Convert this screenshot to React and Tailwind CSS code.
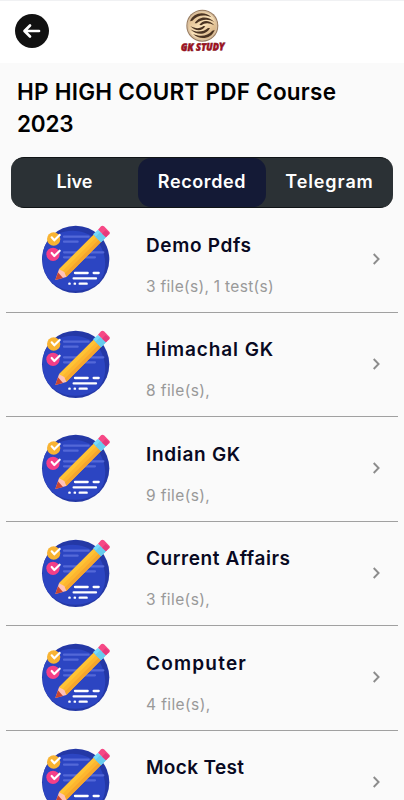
const courses = [
  { title: 'Demo Pdfs', info: '3 file(s), 1 test(s)', titleClass: 'tracking-[0.65px]', infoClass: 'tracking-[0.3px]' },
  { title: 'Himachal GK', info: '8 file(s),', titleClass: 'tracking-[0.9px]', infoClass: 'tracking-[0.4px]' },
  { title: 'Indian GK', info: '9 file(s),', titleClass: 'tracking-[0.7px]', infoClass: 'tracking-[0.4px]' },
  { title: 'Current Affairs', info: '3 file(s),', titleClass: 'tracking-[0.57px]', infoClass: 'tracking-[0.4px]' },
  { title: 'Computer', info: '4 file(s),', titleClass: 'tracking-[1.2px]', infoClass: 'tracking-[0.4px]' },
  { title: 'Mock Test', titleClass: 'tracking-[0.35px]' },
];

const BackIcon = () => (
  <svg width="34" height="34" viewBox="0 0 34 34" fill="none">
    <circle cx="17" cy="17" r="17" fill="#111111" />
    <path d="M24 17H10M15 11.5L9.5 17L15 22.5" stroke="#fff" strokeWidth="2.7" strokeLinecap="round" strokeLinejoin="round" />
  </svg>
);

const Logo = () => (
  <svg width="60" height="52" viewBox="-18 0 180 156" className="overflow-visible">
    <defs>
      <linearGradient id="gold" x1="0" y1="0" x2="1" y2="1">
        <stop offset="0" stopColor="#d2ab7c" />
        <stop offset="0.5" stopColor="#fbe3ba" />
        <stop offset="1" stopColor="#c49a68" />
      </linearGradient>
    </defs>
    <circle cx="73" cy="53" r="48" fill="#96795d" />
    <circle cx="73" cy="53" r="45" fill="#d9c0a0" />
    <circle cx="73" cy="53" r="41" fill="url(#gold)" />
    <g fill="#4a3322">
      <path d="M36 40C46 13 80 8 101 28C78 18 57 22 43 38Z" />
      <path d="M50 46C60 26 88 21 109 42C90 31 69 34 56 46Z" />
      <path d="M64 51C74 36 92 34 109 52C93 43 80 44 70 52Z" />
      <path d="M110 66C100 93 66 98 45 78C68 88 89 84 103 68Z" />
      <path d="M96 60C86 80 58 85 37 64C56 75 77 72 90 60Z" />
      <path d="M82 55C72 70 54 72 37 54C53 63 66 62 76 54Z" />
    </g>
    <text x="9" y="128" textLength="131" lengthAdjust="spacingAndGlyphs" fontFamily="Open Sans, sans-serif" fontSize="31" fontWeight="800" fontStyle="italic" fill="#a9101f" stroke="#7d101b" strokeWidth="1.6" transform="rotate(-1 72 124)">GK STUDY</text>
  </svg>
);

const CourseIcon = () => (
  <svg width="72" height="72" viewBox="30 25 216 216" fill="none">
    <circle cx="137" cy="134" r="101" fill="#2438a6" />
    <path d="M46 91C70 45 150 30 200 75C235 120 235 185 195 213C135 245 60 225 42 165C35 140 37 110 46 91Z" fill="#2c45c2" />
    <g stroke="#5368d8" strokeWidth="6.5" strokeLinecap="round">
      <path d="M102 66H176M102 81H143M102 113H220M102 128H195" />
    </g>
    <g stroke="#fff" strokeWidth="7" strokeLinecap="round">
      <path d="M135 175H173M191 175H206M131 191H198M149 207H170M118 207H119M134 207H135" />
    </g>
    <circle cx="71" cy="73" r="20" fill="#f8b332" />
    <circle cx="69" cy="119" r="20" fill="#f43f88" />
    <path d="M65 68L73 77L89 61M65 115L73 124L89 108" stroke="#fff" strokeWidth="6.5" strokeLinecap="round" strokeLinejoin="round" />
    <path d="M87 164L191 60L213 82L109 187Z" fill="#fdb62f" />
    <path d="M87 164L191 60L199 68L94 173Z" fill="#ffc335" />
    <path d="M101 180L206 75L213 82L109 187Z" fill="#f6a52d" />
    <path d="M87 164L76 196L109 187L103 172Z" fill="#ffc2b8" />
    <path d="M84 173L76 196L99 190Z" fill="#c84632" />
    <path d="M189 59L204 45L228 68L213 83Z" fill="#78dbfb" />
    <path d="M196 66L211 52L228 68L213 83Z" fill="#68cced" />
    <path d="M204 45L213 35Q217 31 222 35L238 51Q242 55 238 59L228 68Z" fill="#f64885" />
    <path d="M216 57L227 46L238 55L228 68Z" fill="#e6397b" />
  </svg>
);

const Chevron = () => (
  <svg width="8" height="12" viewBox="0 0 8 12" fill="none">
    <path d="M1.7 1L6.6 6L1.7 11" stroke="#8c8c8c" strokeWidth="1.9" />
  </svg>
);

const CourseRow = ({ course }) => (
  <div className="mx-[6px] flex h-[104.5px] shrink-0 border-b border-[#a0a0a0]">
    <div className="w-[140px] shrink-0 pl-[34px] pt-[15px]">
      <CourseIcon />
    </div>
    <div className="flex-1 whitespace-nowrap pt-[23.7px]">
      <h2 className={`text-[19px] font-semibold leading-[28px] text-[#080922] ${course.titleClass}`}>{course.title}</h2>
      {course.info && (
        <p className={`mt-[15px] text-[15.5px] leading-[24px] text-[#999999] ${course.infoClass}`}>{course.info}</p>
      )}
    </div>
    <div className="w-[26px] pt-[45.4px]">
      <Chevron />
    </div>
  </div>
);

const App = () => {
  return (
    <div className="flex h-[800px] w-[404px] flex-col overflow-hidden bg-[#fafafa] font-['Inter',sans-serif]">
      <header className="grid h-[63px] shrink-0 grid-cols-3 border-t border-[#f0f1f3] bg-white">
        <button className="h-[34px] w-[34px] ml-[15px] mt-[13px]">
          <BackIcon />
        </button>
        <div className="flex justify-center pt-[7px]">
          <Logo />
        </div>
      </header>

      <h1 className="h-[94px] shrink-0 whitespace-nowrap pl-[17px] pt-[13px] text-[22.5px] font-semibold leading-[32px] text-black">
        <span className="tracking-[0.25px]">HP HIGH COURT PDF Course</span>
        <br />
        <span className="tracking-[-0.2px]">2023</span>
      </h1>

      <nav className="mx-[11px] flex h-[51px] shrink-0 overflow-hidden rounded-[13px] border-y border-[#101416] bg-[#2b3135] text-[18px] font-semibold leading-[46px] text-white">
        <button className="w-[127px] pb-[2px]">Live</button>
        <button className="w-[128px] rounded-[13px] bg-[#141a36] pb-[2px] tracking-[0.6px]">Recorded</button>
        <button className="w-[127px] pb-[2px] tracking-[0.9px]">Telegram</button>
      </nav>

      <main className="flex flex-col">
        {courses.map((course) => (
          <CourseRow key={course.title} course={course} />
        ))}
      </main>
    </div>
  );
};

export default App;
